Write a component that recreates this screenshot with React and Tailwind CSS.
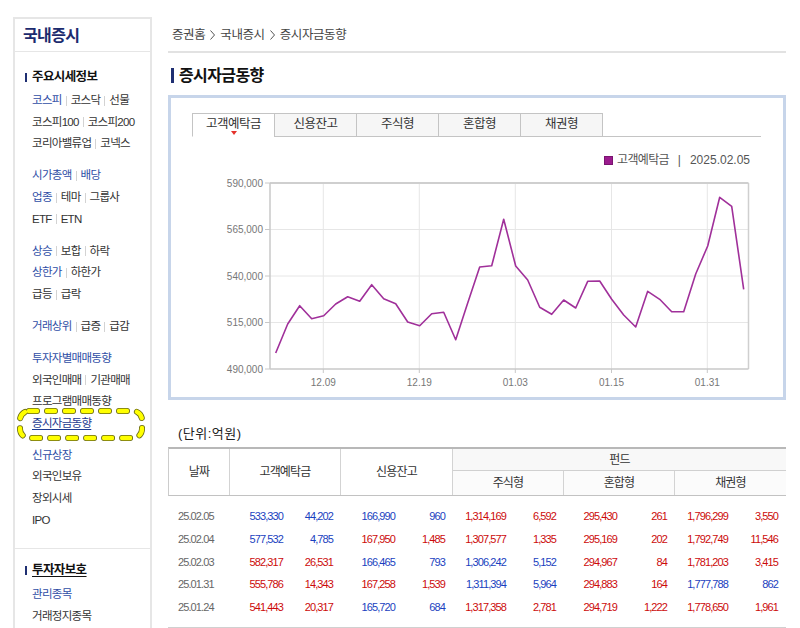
import React from "react";

const sideGroups = [
  [
    [["코스피", 1], ["코스닥", 0], ["선물", 0]],
    [["코스피100", 0], ["코스피200", 0]],
    [["코리아밸류업", 0], ["코넥스", 0]],
  ],
  [
    [["시가총액", 1], ["배당", 1]],
    [["업종", 1], ["테마", 0], ["그룹사", 0]],
    [["ETF", 0], ["ETN", 0]],
  ],
  [
    [["상승", 1], ["보합", 0], ["하락", 0]],
    [["상한가", 1], ["하한가", 0]],
    [["급등", 0], ["급락", 0]],
  ],
  [[["거래상위", 1], ["급증", 0], ["급감", 0]]],
  [
    [["투자자별매매동향", 1]],
    [["외국인매매", 0], ["기관매매", 0]],
    [["프로그램매매동향", 0]],
    [["증시자금동향", 2]],
  ],
  [[["신규상장", 1]], [["외국인보유", 0]], [["장외시세", 0]], [["IPO", 0]]],
];

function LinkRow({ items }) {
  return (
    <div className="flex items-center h-[21.6px] text-[11.5px] tracking-[-0.7px] leading-none">
      {items.map(([t, c], i) => (
        <React.Fragment key={i}>
          {i > 0 && <span className="mx-[4px] h-[10px] w-px bg-[#d3d3d3]" />}
          <span
            className={
              c === 1
                ? "text-[#2f4ea6]"
                : c === 2
                ? "text-[#1d3a8f] underline underline-offset-[2px]"
                : "text-[#333333]"
            }
          >
            {t}
          </span>
        </React.Fragment>
      ))}
    </div>
  );
}

function Sidebar() {
  return (
    <aside className="ml-[13px] mt-[17px] w-[139px] h-[640px] shrink-0 border-2 border-[#e6e6e6]">
      <div className="h-[33px] border-b border-[#e6e6e6] flex items-center pl-[8px] pt-[2px] text-[16px] font-bold tracking-[-0.6px] text-[#1c2b6e]">
        국내증시
      </div>
      <div className="pt-[13px] pb-[17px] border-b border-[#e6e6e6]">
        <div className="flex items-center pl-[10px] h-[25px]">
          <span className="w-[2px] h-[9px] bg-[#1f2f72]" />
          <span className="ml-[5px] text-[12.5px] font-bold tracking-[-0.6px] text-[#111]">주요시세정보</span>
        </div>
        <div className="pl-[17px]">
          {sideGroups.map((g, gi) => (
            <div key={gi} className={gi > 0 ? "mt-[10.5px]" : ""}>
              {g.map((r, ri) => (
                <LinkRow key={ri} items={r} />
              ))}
            </div>
          ))}
        </div>
      </div>
      <div className="pt-[7px]">
        <div className="flex items-center pl-[10px] h-[28px]">
          <span className="w-[2px] h-[9px] bg-[#1f2f72]" />
          <span className="ml-[5px] text-[12.5px] font-bold tracking-[-0.6px] text-[#111] underline underline-offset-[2px]">
            투자자보호
          </span>
        </div>
        <div className="pl-[17px]">
          <LinkRow items={[["관리종목", 1]]} />
          <LinkRow items={[["거래정지종목", 0]]} />
        </div>
      </div>
    </aside>
  );
}

const tabs = ["고객예탁금", "신용잔고", "주식형", "혼합형", "채권형"];

const ys = [
  184, 155, 136.7, 149.7, 146.7, 135, 127.7, 132.3, 115.7, 129.7, 134.7, 153,
  156.7, 144.7, 143.3, 170.7, 134, 98, 96.7, 50.3, 97, 111, 138.3, 145.3, 131,
  139, 112.3, 112, 130.3, 146, 158, 122.3, 130.3, 142.7, 142.7, 105, 77, 28.3,
  37.3, 120.3,
];
const pts = ys.map((y, i) => `${(104.7 + 12 * i).toFixed(1)},${y}`).join(" ");

function Chart() {
  const hLines = [14, 60.5, 107, 153.5, 200];
  const yLabels = ["590,000", "565,000", "540,000", "515,000", "490,000"];
  const vLines = [152.3, 248.3, 344.3, 440.5, 536.3];
  const xLabels = ["12.09", "12.19", "01.03", "01.15", "01.31"];
  return (
    <svg width="612" height="228" className="block" style={{ fontFamily: "'Liberation Sans', sans-serif" }}>
      {hLines.slice(1, 4).map((y) => (
        <line key={y} x1="99" x2="577" y1={y} y2={y} stroke="#e6e6e6" strokeWidth="1" />
      ))}
      {vLines.map((x) => (
        <line key={x} x1={x} x2={x} y1="14" y2="200" stroke="#e6e6e6" strokeWidth="1" />
      ))}
      <line x1="99" x2="577.5" y1="14" y2="14" stroke="#cfcfcf" strokeWidth="2" />
      <line x1="577.5" x2="577.5" y1="14" y2="200" stroke="#cfcfcf" strokeWidth="1.5" />
      <line x1="99" x2="99" y1="14" y2="200" stroke="#c8c8c8" strokeWidth="1.5" />
      <line x1="99" x2="577.5" y1="200" y2="200" stroke="#c8c8c8" strokeWidth="1.5" />
      {hLines.map((y, i) => (
        <g key={y}>
          <line x1="94" x2="99" y1={y} y2={y} stroke="#c8c8c8" />
          <text x="92" y={y + 3.5} textAnchor="end" fontSize="10" fill="#777">
            {yLabels[i]}
          </text>
        </g>
      ))}
      {vLines.map((x, i) => (
        <g key={x}>
          <line x1={x} x2={x} y1="200" y2="204" stroke="#c8c8c8" />
          <text x={x} y="217" textAnchor="middle" fontSize="10" fill="#777">
            {xLabels[i]}
          </text>
        </g>
      ))}
      <polyline points={pts} fill="none" stroke="#a0309a" strokeWidth="1.6" strokeLinejoin="round" />
    </svg>
  );
}

const B = "b";
const R = "r";
const rows = [
  ["25.02.05", [["533,330", B], ["44,202", B], ["166,990", B], ["960", B], ["1,314,169", R], ["6,592", R], ["295,430", R], ["261", R], ["1,796,299", R], ["3,550", R]]],
  ["25.02.04", [["577,532", B], ["4,785", B], ["167,950", R], ["1,485", R], ["1,307,577", R], ["1,335", R], ["295,169", R], ["202", R], ["1,792,749", R], ["11,546", R]]],
  ["25.02.03", [["582,317", R], ["26,531", R], ["166,465", B], ["793", B], ["1,306,242", B], ["5,152", B], ["294,967", R], ["84", R], ["1,781,203", R], ["3,415", R]]],
  ["25.01.31", [["555,786", R], ["14,343", R], ["167,258", R], ["1,539", R], ["1,311,394", B], ["5,964", B], ["294,883", R], ["164", R], ["1,777,788", B], ["862", B]]],
  ["25.01.24", [["541,443", R], ["20,317", R], ["165,720", B], ["684", B], ["1,317,358", R], ["2,781", R], ["294,719", R], ["1,222", R], ["1,778,650", R], ["1,961", R]]],
];

function Table() {
  return (
    <div>
      <div className="grid grid-cols-[61px_111px_112px_111px_111px_111px] grid-rows-[22px_24px] border-t-2 border-t-[#b8b8b8] border-b border-b-[#c2c2c2] border-l border-l-[#cccccc] text-[12px] tracking-[-0.8px] text-[#333]">
        <div className="row-span-2 flex items-center justify-center border-r border-[#d3d3d3]">날짜</div>
        <div className="row-span-2 flex items-center justify-center border-r border-[#d3d3d3]">고객예탁금</div>
        <div className="row-span-2 flex items-center justify-center border-r border-[#d3d3d3]">신용잔고</div>
        <div className="col-span-3 flex items-center justify-center bg-[#f8f8f8] border-b border-[#d0d0d0]">펀드</div>
        <div className="flex items-center justify-center bg-[#fbfbfb] border-r border-[#d3d3d3]">주식형</div>
        <div className="flex items-center justify-center bg-[#fbfbfb] border-r border-[#d3d3d3]">혼합형</div>
        <div className="flex items-center justify-center bg-[#fbfbfb]">채권형</div>
      </div>
      <div className="pt-[9px] pb-[8px] border-b border-[#d0d0d0] font-['Liberation_Sans',sans-serif] text-[11px] tracking-[-0.9px]">
        {rows.map(([d, vals]) => (
          <div
            key={d}
            className="grid grid-cols-[62px_53px_58px_54px_58px_53px_58px_53px_58px_53px_58px] h-[22.75px] items-center"
          >
            <div className="pl-[10px] text-[#666]">{d}</div>
            {vals.map(([v, c], i) => (
              <div
                key={i}
                className={
                  "text-right " +
                  (i % 2 === 1 ? "pr-[8px] " : "") +
                  (c === B ? "text-[#1a3fc0]" : "text-[#cc0a0a]")
                }
              >
                {v}
              </div>
            ))}
          </div>
        ))}
      </div>
    </div>
  );
}

function Chev() {
  return (
    <svg width="5" height="10" viewBox="0 0 5 10" className="mx-[5px]">
      <path d="M0.5 0.5 L4.5 5 L0.5 9.5" fill="none" stroke="#555" strokeWidth="1" />
    </svg>
  );
}

export default function App() {
  return (
    <div className="relative w-[800px] h-[628px] overflow-hidden bg-white flex items-start font-['Liberation_Sans','Noto_Sans_CJK_KR',sans-serif]">
      <Sidebar />
      <main className="ml-[16px] w-[618px] shrink-0">
        <div className="mt-[27px] h-[16px] pl-[4px] flex items-center text-[12.5px] tracking-[-0.4px] text-[#444]">
          <span>증권홈</span>
          <Chev />
          <span>국내증시</span>
          <Chev />
          <span>증시자금동향</span>
        </div>
        <div className="mt-[8px] h-[2px] bg-[#e2e2e2]" />
        <div className="mt-[14px] h-[17px] flex items-center">
          <span className="ml-[3px] w-[3px] h-[15px] bg-[#1f2f72]" />
          <span className="ml-[5px] text-[16px] font-bold tracking-[-0.6px] text-[#111]">증시자금동향</span>
        </div>
        <div className="mt-[11px] h-[305px] border-[3px] border-[#c7d5ea]">
          <div className="pt-[15px] pl-[21px] pr-[22px]">
            <div className="flex border-b border-[#c4c4c4]">
              {tabs.map((t, i) => (
                <div
                  key={t}
                  className={
                    "relative -mb-px h-[24px] w-[83px] flex items-center justify-center border border-[#c4c4c4] text-[12.5px] tracking-[-0.5px] text-[#333] " +
                    (i > 0 ? "-ml-px " : "") +
                    (i === 0 ? "bg-white border-b-white" : "bg-[#f6f6f6]")
                  }
                >
                  <span className="-mt-[1px]">{t}</span>
                  {i === 0 && (
                    <span className="absolute bottom-[1px] left-1/2 -translate-x-1/2 w-0 h-0 border-l-[3px] border-r-[3px] border-t-[4px] border-l-transparent border-r-transparent border-t-[#e4322b]" />
                  )}
                </div>
              ))}
            </div>
            <div className="mt-[14px] h-[18px] flex justify-end items-center pr-[11px] text-[12px] text-[#555]">
              <span className="w-[9px] h-[9px] bg-[#9b1b8e] border border-[#7a1470]" />
              <span className="ml-[4px] tracking-[-0.7px]">고객예탁금</span>
              <span className="mx-[9px]">|</span>
              <span>2025.02.05</span>
            </div>
          </div>
          <Chart />
        </div>
        <div className="mt-[26px] h-[16px] leading-[16px] pl-[10px] text-[13px] tracking-[0.5px] text-[#222]">(단위:억원)</div>
        <div className="mt-[5px]">
          <Table />
        </div>
      </main>
      <svg className="absolute left-0 top-0 pointer-events-none" width="160" height="460">
        <rect x="20" y="411" width="122" height="27" rx="9" fill="none" stroke="#6a6a10" strokeWidth="6" strokeDasharray="8 10" strokeLinecap="round" />
        <rect x="20" y="411" width="122" height="27" rx="9" fill="none" stroke="#ffff00" strokeWidth="4.4" strokeDasharray="8 10" strokeLinecap="round" />
      </svg>
    </div>
  );
}
